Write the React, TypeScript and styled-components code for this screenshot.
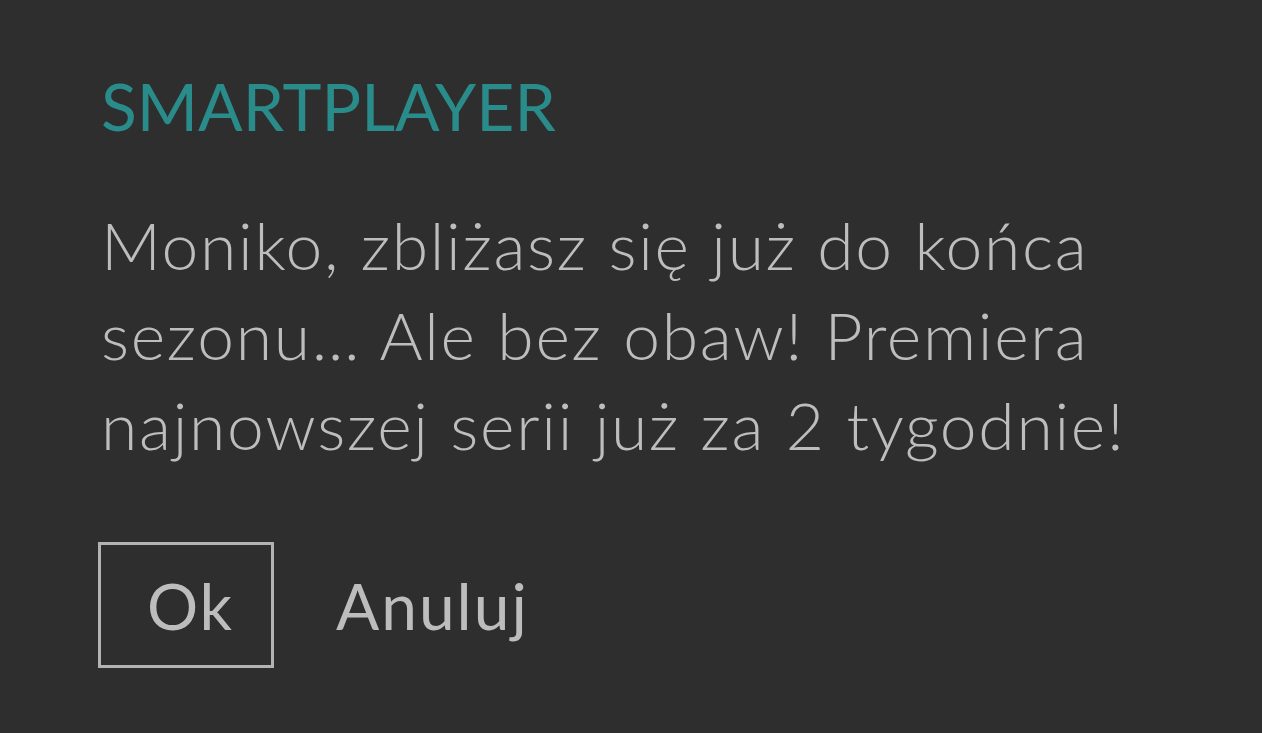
import styled, { createGlobalStyle } from 'styled-components';

const GlobalStyle = createGlobalStyle`
    html, body {
        margin: 0;
        padding: 0;
        background: #2e2e2e;
    }
`;

const Screen = styled.div`
    width: 1262px;
    height: 733px;
    box-sizing: border-box;
    background: #2e2e2e;
    padding: 66px 0 0 101px;
    font-family: Lato, "Open Sans", sans-serif;
`;

const Title = styled.h1`
    margin: 0;
    font-size: 66px;
    line-height: 80px;
    font-weight: 400;
    color: #2a8c8a;
    letter-spacing: 0;
`;

const Message = styled.p`
    margin: 54px 0 0;
    font-size: 66px;
    line-height: 90px;
    font-weight: 300;
    letter-spacing: 1.7px;
    word-spacing: 1px;
    color: #bdbdbd;
`;

const Actions = styled.div`
    display: flex;
    align-items: center;
    gap: 62px;
    margin-top: 72px;
    margin-left: -3px;
`;

const ActionButton = styled.button<{ $outlined?: boolean }>`
    box-sizing: border-box;
    height: 126px;
    padding: ${p => (p.$outlined ? '0 44px 0 46px' : '0')};
    width: ${p => (p.$outlined ? '176px' : 'auto')};
    border: ${p => (p.$outlined ? '3px solid #b3b3b3' : 'none')};
    background: transparent;
    color: #bdbdbd;
    font-family: inherit;
    font-size: 64px;
    font-weight: 400;
    letter-spacing: 2px;
    cursor: pointer;
`;

const App = () => {
    return (
        <>
            <GlobalStyle />
            <Screen>
                <Title>SMARTPLAYER</Title>
                <Message>
                    Moniko, zbliżasz się już do końca<br />
                    sezonu… Ale bez obaw! Premiera<br />
                    najnowszej serii już za 2 tygodnie!
                </Message>
                <Actions>
                    <ActionButton $outlined>Ok</ActionButton>
                    <ActionButton>Anuluj</ActionButton>
                </Actions>
            </Screen>
        </>
    );
};

export default App;
